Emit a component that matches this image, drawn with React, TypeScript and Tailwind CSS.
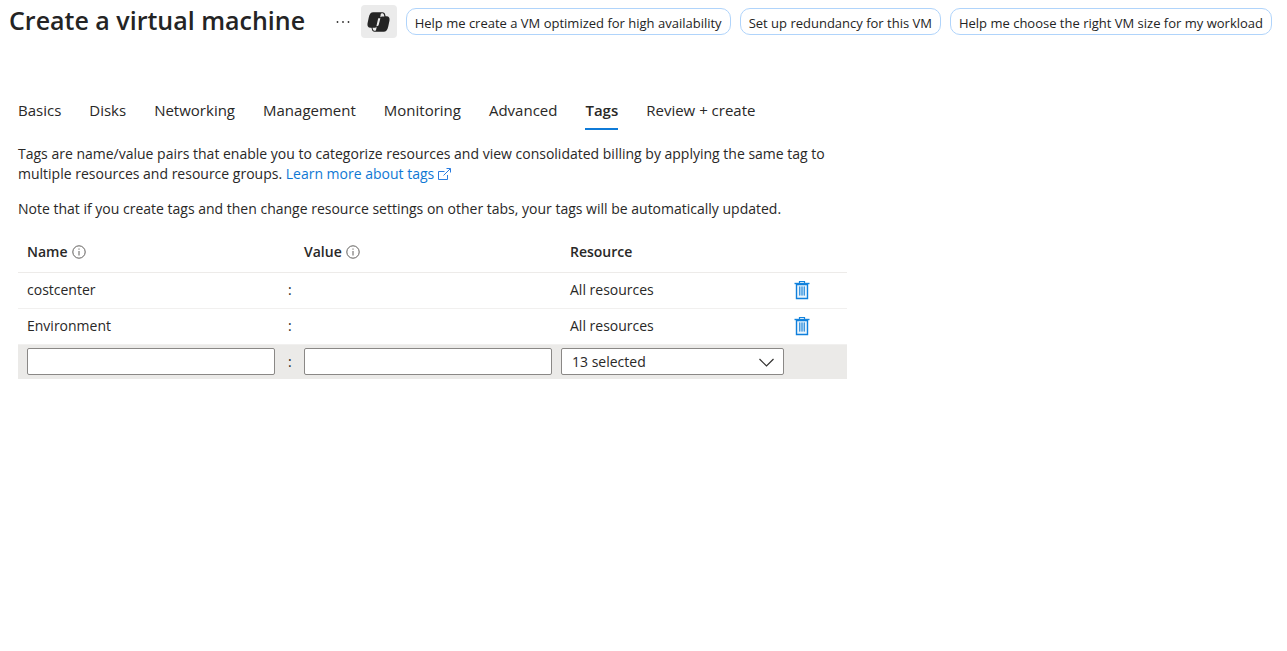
import { useState } from "react";

const suggestions = [
  "Help me create a VM optimized for high availability",
  "Set up redundancy for this VM",
  "Help me choose the right VM size for my workload",
];

const tabs = [
  "Basics",
  "Disks",
  "Networking",
  "Management",
  "Monitoring",
  "Advanced",
  "Tags",
  "Review + create",
];

const initialTags = [
  { name: "costcenter", resource: "All resources" },
  { name: "Environment", resource: "All resources" },
];

function CopilotIcon() {
  return (
    <svg width="23" height="20" viewBox="0 0 23 20" aria-hidden="true">
      <path
        fill="#242424"
        d="M6.300.3h9c1.900 0 2.600 1 3 2.700l.3 1.300h1c2.400 0 3.300 1.700 2.900 4.200l-1.200 5.700c-.8 3.700-2.200 5.500-4.700 5.500H7.700c-1.900 0-2.500-1-2.900-2.700l-.3-1.300h-1C1.100 15.700.1 14 .5 11.500l1.200-5.700C2.500 2.100 3.800.3 6.300.3Z"
      />
      <path fill="#ebebeb" d="M14.800 1.300c1.500 0 2 .6 2.200 1.600l.4 1.500h-1.600c-1.200 0-1.900.3-2.500 1l.3-2.300c.1-1.100.4-1.800 1.200-1.800Z" />
      <path fill="#ebebeb" d="M5.500 15.700h1.700c1.200 0 1.900-.3 2.500-1l-.5 2.500c-.2 1-.5 1.600-1.300 1.600-1.300 0-1.800-.6-2-1.500Z" />
      <path fill="#ebebeb" d="M11.200 6.300h2.200l-1.600 6.300c-.3 1.200-.9 1.700-2.400 1.600Z" />
    </svg>
  );
}

function InfoIcon() {
  return (
    <svg width="14" height="14" viewBox="0 0 14 14" fill="none" aria-hidden="true">
      <circle cx="7" cy="7" r="6.200" stroke="#605e5c" />
      <path d="M7 6v4.500M7 3.500v1.200" stroke="#605e5c" />
    </svg>
  );
}

function ExternalIcon() {
  return (
    <svg width="13" height="13" viewBox="0 0 13 13" fill="none" stroke="#2b7de0" aria-hidden="true">
      <path d="M6.500 3.500h-6v8h9V7M8.500.5h4v4M12.300.700 5.500 7.500" />
    </svg>
  );
}

function TrashIcon() {
  return (
    <svg width="16" height="20" viewBox="0 0 16 20" fill="none" aria-hidden="true">
      <path d="M2.500 4.500h11v14h-11z" fill="#eaf4fc" stroke="#0f7fdc" strokeWidth="1.400" />
      <path d="M.5 3.500h15" stroke="#1484dd" strokeWidth="1.400" />
      <path d="M5.500 3V1.500h5V3" stroke="#1484dd" strokeWidth="1.200" />
      <path d="M5 6.500h6v9H5z" fill="#9dcbf0" />
      <path d="M5.500 6.500v9M8 6.500v9M10.500 6.500v9" stroke="#3f97df" />
    </svg>
  );
}

export default function App() {
  const [active, setActive] = useState("Tags");
  const [tags, setTags] = useState(initialTags);

  return (
    <div className="bg-white font-['Segoe_UI','Open_Sans','Noto_Sans',sans-serif] text-sm text-[#292827]">
      <header className="flex items-start pt-[5px] pr-[15px] pl-[9px]">
        <h1 className="text-[25px] leading-[30px] font-semibold whitespace-nowrap text-[#242424]">
          Create a virtual machine
        </h1>
        <div className="ml-auto flex items-start">
          <button type="button" aria-label="More actions" className="flex h-[33px] w-9 items-center justify-center">
            <svg width="14" height="4" viewBox="0 0 14 4" fill="#323130" aria-hidden="true">
              <circle cx="1.500" cy="2" r=".9" />
              <circle cx="7" cy="2" r=".9" />
              <circle cx="12.500" cy="2" r=".9" />
            </svg>
          </button>
          <button type="button" aria-label="Copilot" className="flex h-[33px] w-9 items-center justify-center rounded bg-[#ebebeb]">
            <CopilotIcon />
          </button>
          <div className="mt-[3px] ml-[9px] flex gap-[9px]">
            {suggestions.map((text) => (
              <button
                key={text}
                type="button"
                className="h-[27px] rounded-[10px] border border-[#b0d4fb] px-2 pt-[3px] text-[13px] whitespace-nowrap text-[#242424]"
              >
                {text}
              </button>
            ))}
          </div>
        </div>
      </header>

      <main className="px-[18px] pt-[60px]">
        <div role="tablist" className="flex flex-wrap gap-7">
          {tabs.map((tab) => (
            <button
              key={tab}
              type="button"
              role="tab"
              aria-selected={active === tab}
              onClick={() => setActive(tab)}
              className={
                active === tab
                  ? "h-8 border-b-2 border-[#0f7bd8] pb-1.5 text-[15px] leading-6 font-semibold"
                  : "h-8 border-b-2 border-transparent pb-1.5 text-[15px] leading-6"
              }
            >
              {tab}
            </button>
          ))}
        </div>

        <div className="max-w-[829px]">
          <p className="mt-3.5 leading-5">
            Tags are name/value pairs that enable you to categorize resources and view consolidated billing by applying the same tag to
            multiple resources and resource groups.{" "}
            <a href="#tags-help" className="inline-flex h-5 items-center gap-1 align-top whitespace-nowrap text-[#0f78d4]">
              Learn more about tags
              <ExternalIcon />
            </a>
          </p>
          <p className="mt-[15px] leading-5">
            Note that if you create tags and then change resource settings on other tabs, your tags will be automatically updated.
          </p>

          <table className="mt-3.5 w-full table-fixed border-collapse text-left">
            <colgroup>
              <col />
              <col className="w-5" />
              <col className="w-[257px]" />
              <col className="w-[223px]" />
              <col className="w-[63px]" />
            </colgroup>
            <thead>
              <tr className="h-[39px] border-b border-[#edebe9]">
                <th className="pl-[9px] font-semibold">
                  <span className="flex items-center gap-1">Name <InfoIcon /></span>
                </th>
                <th />
                <th className="font-semibold">
                  <span className="flex items-center gap-1">Value <InfoIcon /></span>
                </th>
                <th className="pl-[9px] font-semibold">Resource</th>
                <th />
              </tr>
            </thead>
            <tbody>
              {tags.map((tag) => (
                <tr key={tag.name} className="h-9 border-b border-[#f1f0ef]">
                  <td className="pl-[9px]">{tag.name}</td>
                  <td className="pl-1">:</td>
                  <td />
                  <td className="pl-[9px]">{tag.resource}</td>
                  <td className="pl-2.5">
                    <button
                      type="button"
                      aria-label={`Delete ${tag.name}`}
                      className="block"
                      onClick={() => setTags(tags.filter((t) => t !== tag))}
                    >
                      <TrashIcon />
                    </button>
                  </td>
                </tr>
              ))}
              <tr className="h-[35px] bg-[#ebeae8]">
                <td className="px-[9px]">
                  <input aria-label="Name" className="block h-[27px] w-full rounded-xs border border-[#8a8886] bg-white px-2" />
                </td>
                <td className="pl-1">:</td>
                <td className="pr-[9px]">
                  <input aria-label="Value" className="block h-[27px] w-full rounded-xs border border-[#8a8886] bg-white px-2" />
                </td>
                <td>
                  <div className="relative">
                    <select
                      aria-label="Resource"
                      className="block h-[27px] w-full appearance-none rounded-xs border border-[#8a8886] bg-white px-2.5"
                    >
                      <option>13 selected</option>
                    </select>
                    <svg
                      className="pointer-events-none absolute top-2.5 right-2.5"
                      width="15"
                      height="9"
                      viewBox="0 0 15 9"
                      fill="none"
                      stroke="#323130"
                      strokeWidth="1.200"
                      aria-hidden="true"
                    >
                      <path d="m.5 1 7 7 7-7" />
                    </svg>
                  </div>
                </td>
                <td />
              </tr>
            </tbody>
          </table>
        </div>
      </main>
    </div>
  );
}
